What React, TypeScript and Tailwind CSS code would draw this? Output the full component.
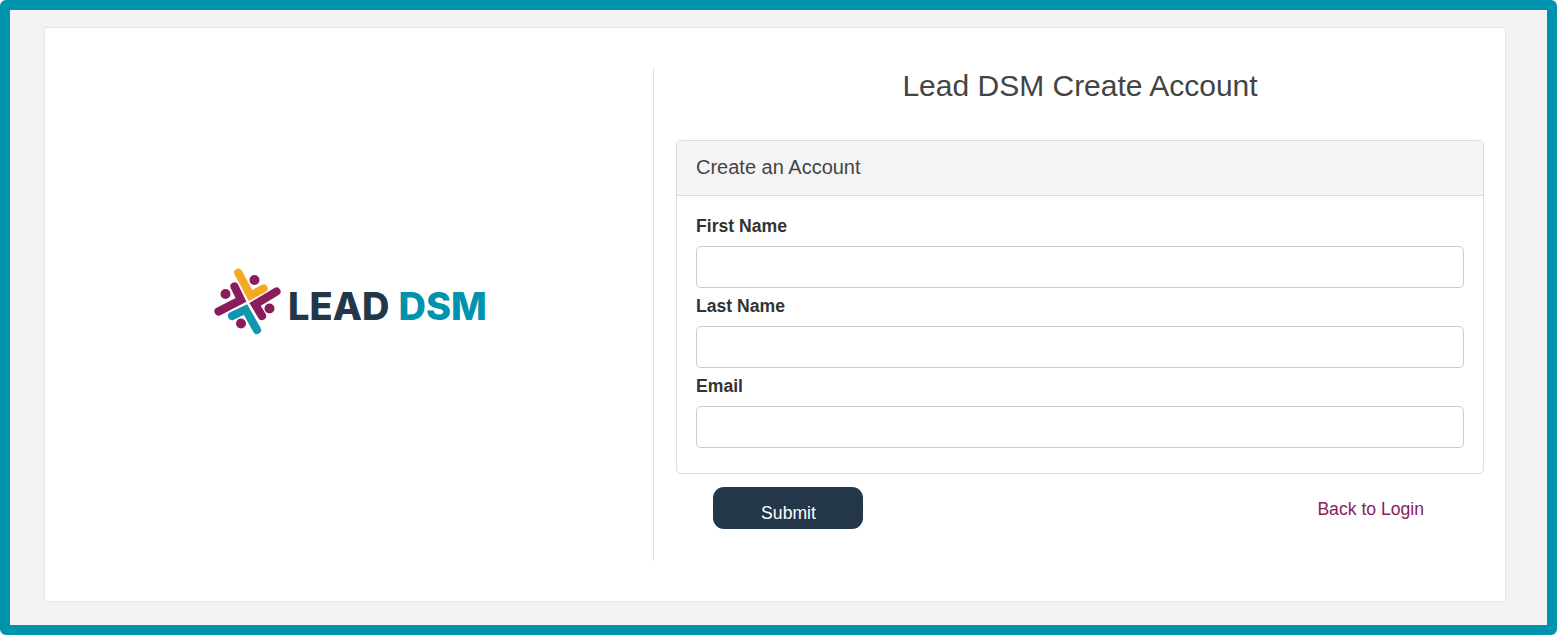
export default function App() {
  const fields = ["First Name", "Last Name", "Email"];
  return (
    <div className="h-[635px] w-[1557px] overflow-hidden rounded-[6px] border-[10px] border-[#0093ad] bg-[#f3f3f3] pb-[23px] pl-[34px] pr-[41px] pt-[17px] font-['Liberation_Sans',Arial,sans-serif] text-[#333333]">
      <div className="flex h-[575px] border border-[#e6e6e6] bg-white pb-[40px] pt-[40px]">
        <div className="flex w-[609px] shrink-0 items-center justify-center border-r border-[#e0e0e0] pb-[28px]">
          <div className="flex items-center">
            <svg width="74" height="70" viewBox="210 266 74 70" fill="none" className="shrink-0">
              <g strokeWidth="8.2" strokeLinecap="round" strokeLinejoin="miter">
                <path d="M237.3 272.7 L249.5 295.5 L262.5 288.5" stroke="#f7a823" />
                <path d="M217.5 311.5 L240 300 L233.5 286.5" stroke="#8a1c5b" />
                <path d="M275.5 291.5 L254 304.5 L261 316" stroke="#8a1c5b" transform="translate(0 0)" />
                <path d="M256 330 L244.5 309.5 L231 316" stroke="#0e97ae" />
              </g>
              <circle cx="253.5" cy="280" r="5" fill="#8a1c5b" />
              <circle cx="224.5" cy="294" r="5" fill="#8a1c5b" />
              <circle cx="268.5" cy="308.5" r="5" fill="#8a1c5b" />
              <circle cx="240" cy="323.5" r="5" fill="#8a1c5b" />
            </svg>
            <span className="ml-[3px] mt-[10px] flex gap-[9px] whitespace-nowrap font-['Inter',sans-serif] text-[38px] font-extrabold leading-none text-[#233748]">
              <span>LEAD</span>
              <span className="text-[#0093ad]">DSM</span>
            </span>
          </div>
        </div>
        <div className="flex min-w-0 flex-1 flex-col pl-[22px] pr-[21px]">
          <h1 className="h-[72px] text-center text-[30px] leading-[36px] text-[#444444]">Lead DSM Create Account</h1>
          <div className="rounded-[5px] border border-[#dddddd]">
            <div className="flex h-[55px] items-center rounded-t-[5px] border-b border-[#dddddd] bg-[#f4f4f4] px-[19px] pb-[2px] text-[20px] text-[#444444]">
              Create an Account
            </div>
            <div className="flex h-[277px] flex-col px-[19px] pt-[18px]">
              {fields.map((f) => (
                <div key={f} className="h-[80px]">
                  <label className="block h-[32px] text-[17.6px] font-bold leading-[24px] text-[#333333]">{f}</label>
                  <input type="text" className="block h-[42px] w-full rounded-[5px] border border-[#cccccc] bg-white" />
                </div>
              ))}
            </div>
          </div>
          <div className="mt-[13px] flex items-start justify-between pl-[37px] pr-[60px]">
            <button className="h-[42px] w-[150px] rounded-[11px] bg-[#233748] pl-[1px] pt-[10px] text-center text-[17.6px] leading-[24px] text-white">Submit</button>
            <a className="mt-[10px] text-[17.6px] leading-[24px] text-[#8a1c5b]">Back to Login</a>
          </div>
        </div>
      </div>
    </div>
  );
}
